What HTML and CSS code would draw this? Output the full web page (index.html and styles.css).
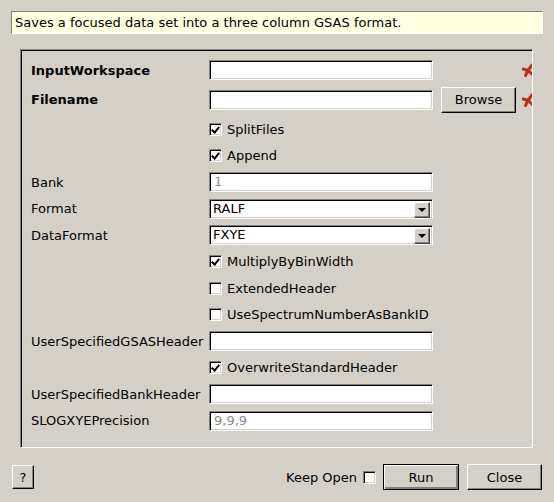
FILE: index.html
```html
<!DOCTYPE html>
<html>
<head>
<meta charset="utf-8">
<link rel="stylesheet" href="styles.css">
</head>
<body>
<div class="dialog">
  <div class="desc">Saves a focused data set into a three column GSAS format.</div>
  <div class="frame">
    <div class="grid">
      <div class="label bold">InputWorkspace</div>
      <div class="field"></div>
      <div></div>
      <div class="star"><svg width="12" height="14" viewBox="0 0 12 14"><path d="M6 7.5 L10 2 M6 7.5 L1.2 6 M6 7.5 L3.5 12.5 M6 7.5 L11 12" stroke="#bd2d1c" stroke-width="3" stroke-linecap="round" fill="none"/></svg></div>

      <div class="label bold">Filename</div>
      <div class="field"></div>
      <div class="btn browse">Browse</div>
      <div class="star"><svg width="12" height="14" viewBox="0 0 12 14"><path d="M6 7.5 L10 2 M6 7.5 L1.2 6 M6 7.5 L3.5 12.5 M6 7.5 L11 12" stroke="#bd2d1c" stroke-width="3" stroke-linecap="round" fill="none"/></svg></div>

      <div class="check span"><span class="cb on"></span>SplitFiles</div>
      <div class="check span"><span class="cb on"></span>Append</div>

      <div class="label">Bank</div>
      <div class="field muted">1</div>

      <div class="label">Format</div>
      <div class="field combo">RALF<span class="arrow"></span></div>

      <div class="label">DataFormat</div>
      <div class="field combo">FXYE<span class="arrow"></span></div>

      <div class="check span"><span class="cb on"></span>MultiplyByBinWidth</div>
      <div class="check span"><span class="cb"></span>ExtendedHeader</div>
      <div class="check span"><span class="cb"></span>UseSpectrumNumberAsBankID</div>

      <div class="label">UserSpecifiedGSASHeader</div>
      <div class="field"></div>

      <div class="check span"><span class="cb on"></span>OverwriteStandardHeader</div>

      <div class="label">UserSpecifiedBankHeader</div>
      <div class="field"></div>

      <div class="label">SLOGXYEPrecision</div>
      <div class="field muted">9,9,9</div>
    </div>
  </div>
  <div class="footer">
    <div class="btn help">?</div>
    <div class="spacer"></div>
    <div class="keep">Keep Open <span class="cb"></span></div>
    <div class="btn wide default">Run</div>
    <div class="btn wide">Close</div>
  </div>
</div>
</body>
</html>
```

FILE: styles.css
```css
html, body {
  margin: 0;
  padding: 0;
  background: #d4d0c8;
}
body {
  width: 554px;
  height: 502px;
  overflow: hidden;
  font-family: "DejaVu Sans", sans-serif;
  font-size: 13px;
  color: #000;
}
.dialog {
  display: flex;
  flex-direction: column;
}
.desc {
  margin: 11px 11px 0 11px;
  height: 23px;
  box-sizing: border-box;
  background: #ffffe1;
  border: 1px solid;
  border-color: #808080 #ffffff #ffffff #808080;
  padding-left: 3px;
  line-height: 21px;
  white-space: nowrap;
}
.frame {
  margin: 15px 21px 0 20px;
  height: 399px;
  box-sizing: border-box;
  border: 1px solid;
  border-color: #808080 #ffffff #ffffff #808080;
  box-shadow: inset 1px 1px 0 #000, inset -1px -1px 0 #d4d0c8;
  padding: 10px 0 0 10px;
  overflow: hidden;
}
.grid {
  display: grid;
  grid-template-columns: 170px 224px 75px 12px;
  column-gap: 8px;
  grid-template-rows: 20px 26px;
  grid-auto-rows: 20px;
  row-gap: 6.5px;
  align-items: center;
}
.label {
  grid-column: 1;
  white-space: nowrap;
}
.bold {
  font-weight: bold;
}
.field {
  grid-column: 2;
  position: relative;
  height: 20px;
  box-sizing: border-box;
  background: #fff;
  border: 1px solid;
  border-color: #808080 #ffffff #ffffff #808080;
  box-shadow: inset 1px 1px 0 #000, inset -1px -1px 0 #d4d0c8;
  padding-left: 4px;
  line-height: 18px;
}
.muted {
  color: #8a8a8a;
}
.combo {
  padding-left: 3px;
}
.arrow {
  position: absolute;
  right: 2px;
  top: 2px;
  width: 16px;
  height: 16px;
  box-sizing: border-box;
  background: #d4d0c8;
  border: 1px solid;
  border-color: #ffffff #404040 #404040 #ffffff;
  box-shadow: inset -1px -1px 0 #808080;
}
.arrow::after {
  content: "";
  position: absolute;
  left: 3px;
  top: 5px;
  border-left: 4px solid transparent;
  border-right: 4px solid transparent;
  border-top: 4px solid #000;
}
.span {
  grid-column: 2 / span 3;
}
.check {
  display: flex;
  align-items: center;
  white-space: nowrap;
}
.cb {
  display: inline-block;
  position: relative;
  width: 13px;
  height: 13px;
  box-sizing: border-box;
  background: #fff;
  border: 1px solid;
  border-color: #808080 #ffffff #ffffff #808080;
  box-shadow: inset 1px 1px 0 #000, inset -1px -1px 0 #d4d0c8;
  margin-right: 5px;
  flex: none;
}
.cb.on::after {
  content: "";
  position: absolute;
  left: 3px;
  top: 1px;
  width: 3px;
  height: 6px;
  border-right: 2px solid #000;
  border-bottom: 2px solid #000;
  transform: rotate(40deg);
  transform-origin: center;
}
.star {
  grid-column: 4;
  display: flex;
  align-items: center;
  margin-left: -2px;
}
.btn {
  box-sizing: border-box;
  background: #d4d0c8;
  border: 1px solid;
  border-color: #ffffff #000000 #000000 #ffffff;
  box-shadow: inset -1px -1px 0 #808080;
  display: flex;
  align-items: center;
  justify-content: center;
}
.browse {
  grid-column: 3;
  height: 26px;
}
.footer {
  display: flex;
  align-items: center;
  margin-top: 16px;
  padding: 0 12px 0 12px;
  height: 26px;
}
.help {
  width: 22px;
  height: 24px;
}
.spacer {
  flex: 1;
}
.keep {
  display: flex;
  align-items: center;
  white-space: nowrap;
}
.keep .cb {
  margin-left: 6px;
  margin-right: 7px;
}
.wide {
  width: 75px;
  height: 26px;
  margin-left: 8px;
}
.default {
  width: 76px;
  border-color: #000;
  box-shadow: inset 1px 1px 0 #ffffff, inset -2px -2px 0 #808080;
  margin-left: 0;
}
```
